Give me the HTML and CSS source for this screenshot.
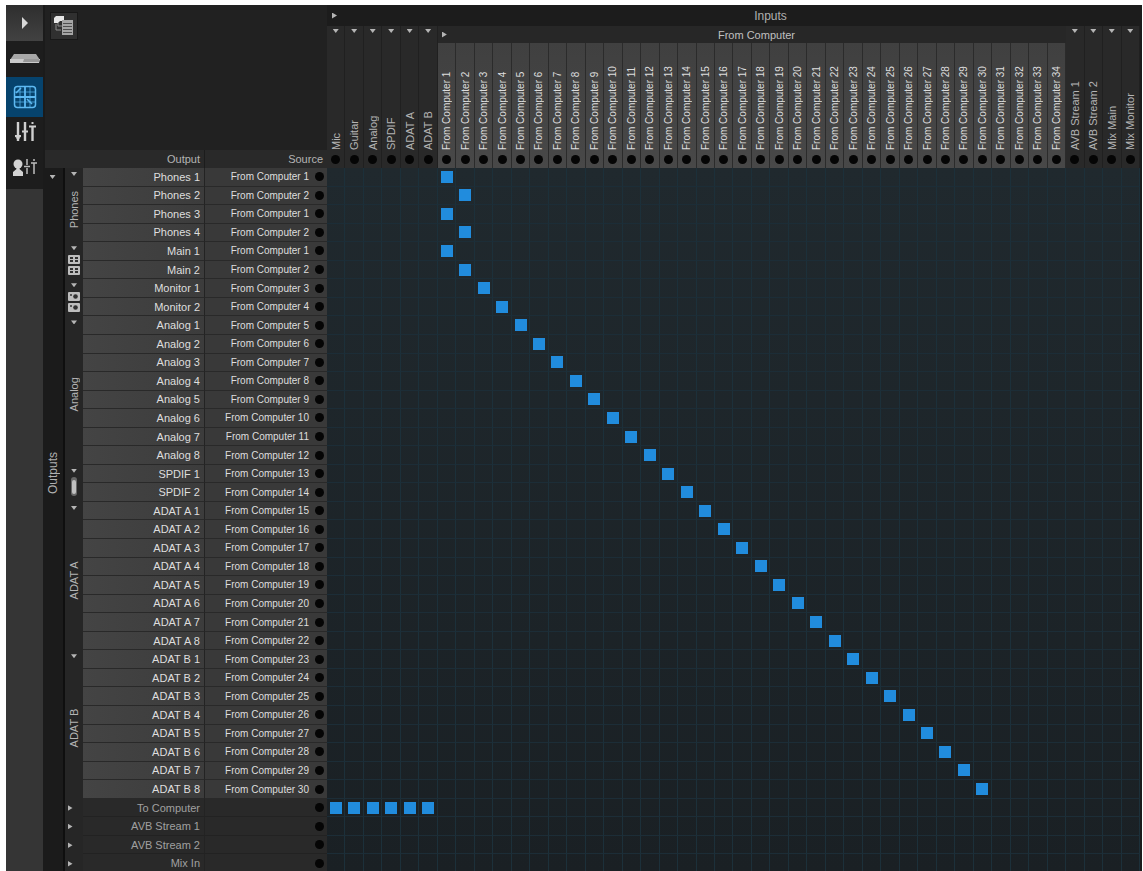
FILE: index.html
```
<!DOCTYPE html>
<html lang="en">
<head>
    <meta charset="UTF-8">
    <meta name="viewport" content="width=device-width, initial-scale=1.0">
    <title>Routing Matrix</title>
    <link rel="stylesheet" href="styles.css">
</head>
<body>
<div class="app">
    <nav class="sidebar">
        <button class="side-btn expand" aria-label="Expand">
            <svg width="8" height="14" viewBox="0 0 8 14"><path d="M1 1 L7 7 L1 13 Z" fill="#d8d8d8"/></svg>
        </button>
        <button class="side-btn" aria-label="Device">
            <svg width="32" height="12" viewBox="0 0 32 12"><path d="M5 1 H27 L31 7 H1 Z" fill="#a8a8a8"/><path d="M1 6 H31 L30 10 H1 Z" fill="#cacaca"/><path d="M15 6 H30 V9 H14 Z" fill="#979797"/></svg>
        </button>
        <button class="side-btn active" aria-label="Routing">
            <svg width="24" height="24" viewBox="0 0 24 24" fill="none" stroke="#5db9f2"><rect x="1.500" y="1.500" width="21" height="21" rx="3" stroke-width="1.500"/><path d="M2 7 H22 M2 17 H22 M7 2 V22 M17 2 V22" stroke-width="1" opacity=".7"/><path d="M1 12 H23 M12 1 V23" stroke-width="1.800"/><path d="M3 8 L8 3 M14 14 L19 19" stroke-width="1.500"/></svg>
        </button>
        <button class="side-btn mixing" aria-label="Mixing">
            <svg width="22" height="22" viewBox="0 0 22 22" stroke="#cfcfcf" fill="none"><path d="M4 1 V20 M11 1 V20 M18.500 5 V20" stroke-width="2.400"/><path d="M1 15 H7 M8 10.500 H14 M15 5.500 H22" stroke-width="2"/><path d="M2 16 L4 19 L6 16" stroke-width="1"/><path d="M18.500 1 V3" stroke-width="2"/></svg>
        </button>
        <button class="side-btn aux" aria-label="Aux mixing">
            <svg width="24" height="18" viewBox="0 0 24 18"><circle cx="5" cy="5" r="4.500" fill="#d2d2d2"/><path d="M3 7 H7 L6.500 10 L10 13 V17 H0 V13 L3.500 10 Z" fill="#d2d2d2"/><path d="M14 0 V6 M14 9 V15 M11 7.500 H17 M21 4 V15 M18 4 H24 M21 0 V2" stroke="#bdbdbd" stroke-width="1.500" fill="none"/></svg>
        </button>
    </nav>

    <main class="matrix">
        <div class="corner">
            <button class="list-btn" aria-label="Presets">
                <svg width="20" height="20" viewBox="0 0 20 20"><path d="M0 2 L2 0 H10 V5 H6 L4 7 H0 Z" fill="#e6e6e6"/><path d="M2 8 V14 H7 M4 7 V10 H8" stroke="#8a8a8a" fill="none"/><rect x="8" y="4" width="11" height="15" fill="#a6a6a6"/><path d="M9 7.500 H18 M9 10.500 H18 M9 13.500 H18 M9 16.500 H18" stroke="#505050"/></svg>
            </button>
            <div class="list-head">
                <span class="head-output">Output</span>
                <span class="head-source">Source</span>
            </div>
        </div>
        <div class="inputs" id="inputs"></div>
        <div class="outputs">
            <div class="outputs-bar">
                <button class="tri down" aria-label="Collapse outputs"></button>
                <span class="vertical">Outputs</span>
            </div>
            <div class="output-rows" id="output-rows"></div>
        </div>
        <div class="grid" id="grid"></div>
    </main>
</div>

<script src="script.js"></script>
</body>
</html>
```
FILE: styles.css
```
* {
    box-sizing: border-box;
    margin: 0;
    padding: 0;
}
body {
    display: flex;
    height: 100vh;
    min-width: 900px;
    padding: 5px 1px 0 6px;
    background-color: #fff;
    font-family: "Liberation Sans", Arial, sans-serif;
    font-size: 11px;
    color: #dedede;
}
button {
    border: none;
    background: none;
    cursor: pointer;
}
.app {
    display: flex;
    flex: 1;
    min-width: 0;
    overflow: hidden;
    background-color: #1b1b1b;
}

/* left navigation */
.sidebar {
    display: flex;
    flex-direction: column;
    width: 37px;
    background-color: #353535;
}
.side-btn {
    display: flex;
    align-items: center;
    justify-content: center;
    height: 36px;
    background-color: #1d1d1d;
}
.side-btn.expand {
    background: linear-gradient(#2e2e2e, #424242);
}
.side-btn.active {
    height: 40px;
    background-color: #06436d;
}
.side-btn.mixing {
    height: 30px;
}
.side-btn.aux {
    height: 42px;
}

/* whole matrix */
.matrix {
    display: grid;
    flex: 1;
    min-width: 0;
    grid-template-columns: 284px minmax(0, 1fr);
    grid-template-rows: 163px minmax(0, 1fr);
    padding-right: 2px;
}
.corner {
    display: flex;
    flex-direction: column;
    justify-content: space-between;
    margin-left: 2px;
    background-color: #212121;
}
.list-btn {
    display: flex;
    align-items: center;
    justify-content: center;
    width: 28px;
    height: 28px;
    margin: 7px 0 0 5px;
    background-color: #303030;
    border: 1px solid #181818;
}
.list-head {
    display: flex;
    height: 18px;
    line-height: 18px;
    text-align: right;
    background-color: #292929;
    color: #b4b4b4;
}
.head-output {
    width: 160px;
    padding-right: 4px;
    border-right: 1px solid #1c1c1c;
}
.head-source {
    flex: 1;
    padding-right: 4px;
}

/* input headings */
.inputs {
    display: grid;
    grid-template-rows: 21px 17px minmax(0, 1fr);
    background-color: #222;
}
.inputs-bar {
    display: flex;
    align-items: center;
    grid-row: 1;
    grid-column: 1 / -1;
    padding-left: 5px;
    background-color: #1c1c1c;
    font-size: 12px;
    color: #b0b0b0;
}
.inputs-bar span {
    flex: 1;
    padding-left: 64px;
    text-align: center;
}
.input-group {
    display: flex;
    align-items: center;
    grid-row: 2;
    padding-left: 4px;
    background-color: #272727;
    color: #c0c0c0;
}
.input-group span {
    flex: 1;
    text-align: center;
}
.input {
    display: flex;
    flex-direction: column;
    align-items: center;
    grid-row: 3;
    padding-bottom: 4px;
    border-right: 1px solid #2b2b2b;
    background: linear-gradient(#404040, #484848);
    font-size: 10px;
}
.input.closed {
    grid-row: 2 / 4;
    padding-top: 3px;
    background: #292929;
    border-right: 1px solid #202020;
    font-size: 11px;
    color: #b4b4b4;
}
.input .vertical {
    flex: 1;
    padding-top: 5px;
    text-align: left;
}
.vertical {
    writing-mode: vertical-rl;
    transform: rotate(180deg);
    white-space: nowrap;
}
.dot {
    width: 9px;
    height: 9px;
    border-radius: 50%;
    background-color: #050505;
}
.tri {
    width: 5px;
    height: 6px;
    background-color: #b5b5b5;
    clip-path: polygon(0 0, 100% 50%, 0 100%);
}
.tri.down {
    width: 6px;
    height: 4px;
    clip-path: polygon(0 0, 100% 0, 50% 100%);
}

/* output list */
.outputs {
    display: grid;
    grid-template-columns: 20px minmax(0, 1fr);
    margin: 0 0 -2px 2px;
}
.outputs-bar {
    display: flex;
    flex-direction: column;
    align-items: center;
    padding: 7px 3px 0 0;
    background-color: #1b1b1b;
    border-right: 2px solid #0f0f0f;
    font-size: 12px;
    color: #b0b0b0;
}
.outputs-bar .vertical {
    flex: 1;
    padding-top: 106px;
    text-align: center;
}
.output-rows {
    display: grid;
    grid-template-columns: 18px 122px minmax(0, 1fr);
    background-color: #262626;
}
.output-group {
    display: flex;
    flex-direction: column;
    align-items: center;
    grid-column: 1;
    padding-top: 4px;
    color: #b4b4b4;
}
.output-group .vertical {
    flex: 1;
    text-align: center;
}
.output-group svg {
    margin-top: 4px;
}
.output-group.closed {
    justify-content: center;
    padding: 0 8px 0 0;
}
.output, .source {
    display: flex;
    align-items: center;
    justify-content: flex-end;
    min-height: 0;
    border-bottom: 1px solid #292929;
    background: linear-gradient(90deg, #444, #3c3c3c);
}
.output {
    grid-column: 2;
    padding-right: 4px;
    border-right: 1px solid #232323;
}
.source {
    grid-column: 3;
    gap: 6px;
    padding-right: 3px;
    background: #393939;
    font-size: 10px;
}
.output.closed, .source.closed {
    background: #292929;
    border-bottom-color: #222;
    color: #a0a0a0;
}

/* crosspoints */
.grid {
    display: grid;
    margin-bottom: -2px;
    background: linear-gradient(#20292e, #1a2024);
}
.point {
    display: flex;
    align-items: center;
    justify-content: center;
    appearance: none;
    min-width: 0;
    min-height: 0;
    border-right: 1px solid #1c303a;
    border-bottom: 1px solid #1c2d37;
    cursor: pointer;
}
.point:checked::before {
    content: "";
    width: 12px;
    height: 12px;
    background-color: #218cdd;
}
```
FILE: script.js
```
const inputs = document.getElementById('inputs');
const outputRows = document.getElementById('output-rows');
const grid = document.getElementById('grid');

const icons = {
    Main: '<svg width="12" height="22" viewBox="0 0 12 22"><rect y="1" width="12" height="9" rx="1" fill="#bdbdbd"/><rect y="12" width="12" height="9" rx="1" fill="#bdbdbd"/><path d="M2 3 H5 V5 H2 Z M7 3 H10 V5 H7 Z M2 6 H5 V8 H2 Z M7 6 H10 V8 H7 Z M2 14 H5 V16 H2 Z M7 14 H10 V16 H7 Z M2 17 H5 V19 H2 Z M7 17 H10 V19 H7 Z" fill="#303030"/></svg>',
    Monitor: '<svg width="12" height="22" viewBox="0 0 12 22"><rect y="1" width="12" height="9" rx="1" fill="#bdbdbd"/><rect y="12" width="12" height="9" rx="1" fill="#bdbdbd"/><path d="M2 3 H4 V5 H2 Z M2 14 H4 V16 H2 Z" fill="#555"/><circle cx="7.500" cy="5.500" r="2.300" fill="#303030"/><circle cx="7.500" cy="16.500" r="2.300" fill="#303030"/></svg>',
    SPDIF: '<svg width="8" height="20" viewBox="0 0 8 20"><rect x="1" y="0" width="6" height="19" rx="3" fill="#686868"/><rect x="2" y="3" width="4" height="14" rx="2" fill="#c0c0c0"/></svg>'
};

// Output groups that are open, with the number of channels
const outputGroups = [
    ['Phones', 4],
    ['Main', 2],
    ['Monitor', 2],
    ['Analog', 8],
    ['SPDIF', 2],
    ['ADAT A', 8],
    ['ADAT B', 8]
];
const closedOutputs = ['To Computer', 'AVB Stream 1', 'AVB Stream 2', 'Mix In'];

const columns = [];
['Mic', 'Guitar', 'Analog', 'SPDIF', 'ADAT A', 'ADAT B'].forEach(name => columns.push({ name, closed: true }));
for (let i = 1; i <= 34; i++) {
    columns.push({ name: `From Computer ${i}`, closed: false });
}
['AVB Stream 1', 'AVB Stream 2', 'Mix Main', 'Mix Monitor'].forEach(name => columns.push({ name, closed: true }));

// Flat list of rows, source is the number of the computer channel
const rows = [];
outputGroups.forEach(([name, count]) => {
    for (let i = 1; i <= count; i++) {
        const n = rows.length;
        rows.push({ name: `${name} ${i}`, source: n < 4 ? n % 2 + 1 : n - 3 });
    }
});
closedOutputs.forEach(name => rows.push({ name, closed: true }));

// Input headings
let html = `<div class="inputs-bar"><button class="tri" aria-label="Collapse inputs"></button><span>Inputs</span></div>
    <div class="input-group" style="grid-column: 7 / span 34"><button class="tri" aria-label="Collapse From Computer"></button><span>From Computer</span></div>`;
columns.forEach((col, i) => {
    html += `<div class="input ${col.closed ? 'closed' : ''}" style="grid-column: ${i + 1}">
        ${col.closed ? `<button class="tri down" aria-label="Expand ${col.name}"></button>` : ''}
        <span class="vertical">${col.name}</span><i class="dot"></i></div>`;
});
inputs.style.gridTemplateColumns = `repeat(${columns.length}, minmax(0, 1fr))`;
inputs.innerHTML = html;

// Output list
html = '';
let start = 1;
outputGroups.forEach(([name, count]) => {
    html += `<div class="output-group" style="grid-row: ${start} / span ${count}">
        <button class="tri down" aria-label="Collapse ${name}"></button>
        ${icons[name] || `<span class="vertical">${name}</span>`}</div>`;
    start += count;
});
rows.forEach((row, i) => {
    const closed = row.closed ? 'closed' : '';
    if (row.closed) {
        html += `<div class="output-group closed" style="grid-row: ${i + 1}"><button class="tri" aria-label="Expand ${row.name}"></button></div>`;
    }
    html += `<div class="output ${closed}" style="grid-row: ${i + 1}">${row.name}</div>
        <div class="source ${closed}" style="grid-row: ${i + 1}">${row.closed ? '' : `<span>From Computer ${row.source}</span>`}<i class="dot"></i></div>`;
});
outputRows.style.gridTemplateRows = `repeat(${rows.length}, minmax(18px, 1fr))`;
outputRows.innerHTML = html;

// Crosspoints
html = '';
rows.forEach(row => {
    columns.forEach((col, i) => {
        const on = row.source ? col.name === `From Computer ${row.source}` : row.name === 'To Computer' && i < 6;
        html += `<input type="checkbox" class="point" aria-label="${col.name} to ${row.name}" ${on ? 'checked' : ''}>`;
    });
});
grid.style.gridTemplateColumns = inputs.style.gridTemplateColumns;
grid.style.gridTemplateRows = outputRows.style.gridTemplateRows;
grid.innerHTML = html;
```
